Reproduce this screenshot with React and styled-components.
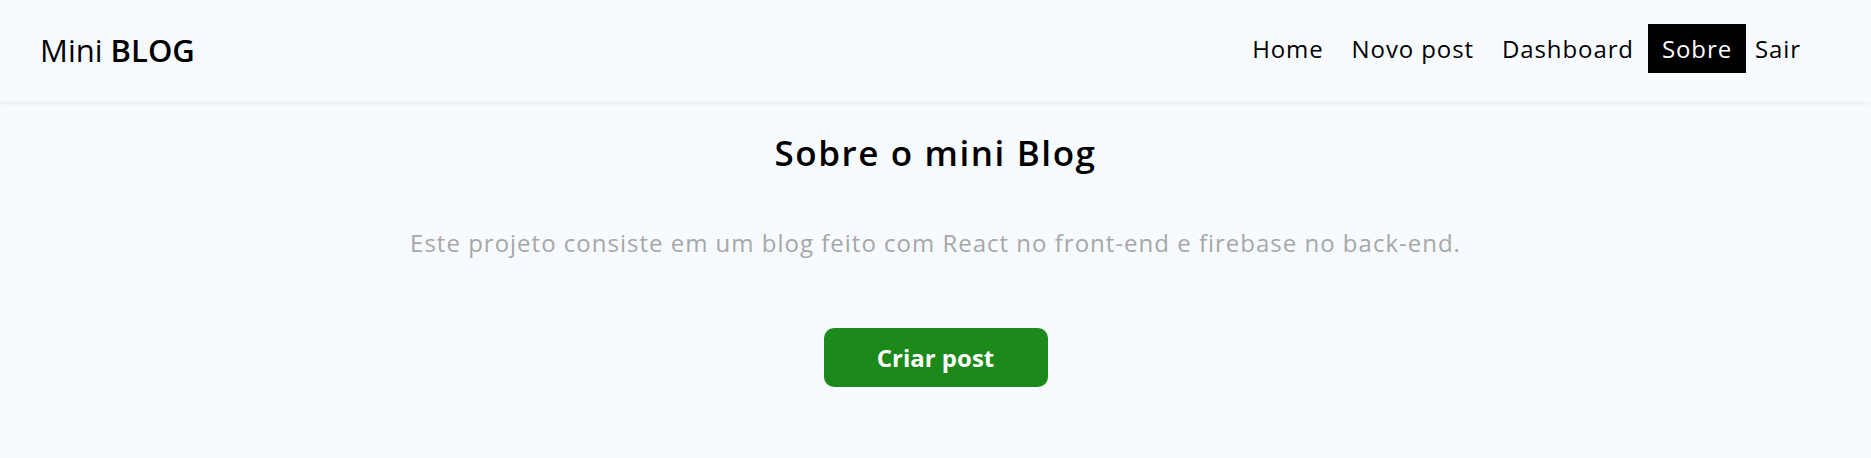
import React from "react";
import styled, { createGlobalStyle } from "styled-components";

const GlobalStyle = createGlobalStyle`
  * { box-sizing: border-box; }
  body {
    margin: 0;
    background: #f7fbff;
    font-family: "Open Sans", "Liberation Sans", sans-serif;
    color: #000;
  }
`;

const Navbar = styled.nav`
  display: flex;
  justify-content: space-between;
  align-items: center;
  height: 102px;
  padding: 0 61px 0 40px;
  background: #f7fbff;
  box-shadow: 0 2px 5px rgba(0, 0, 0, 0.06);
`;

const Brand = styled.a`
  font-size: 31px;
  font-weight: 400;
  color: #000;
  text-decoration: none;
  margin-top: -2px;
  strong { font-weight: 600; }
`;

const Links = styled.ul`
  display: flex;
  align-items: center;
  list-style: none;
  margin: 0;
  padding: 0;
  margin-top: -5px;
`;

const NavLink = styled.a`
  display: block;
  font-size: 24px;
  letter-spacing: 0.9px;
  padding: 8px ${(p) => (p.$tight ? "9px" : "14px")};
  color: ${(p) => (p.$active ? "#fff" : "#000")};
  background: ${(p) => (p.$active ? "#000" : "transparent")};
  text-decoration: none;
  cursor: pointer;
`;

const Main = styled.main`
  display: flex;
  flex-direction: column;
  align-items: center;
  padding-top: 27px;
`;

const Title = styled.h2`
  font-size: 35px;
  font-weight: 600;
  letter-spacing: 1.6px;
  margin: 0;
`;

const Text = styled.p`
  font-size: 24px;
  letter-spacing: 1px;
  color: #a7a7a7;
  margin: 50px 0 0;
`;

const Button = styled.a`
  display: flex;
  align-items: center;
  justify-content: center;
  width: 224px;
  height: 59px;
  margin-top: 69px;
  background: #1b8a1b;
  border-radius: 10px;
  color: #fff;
  font-size: 24px;
  font-weight: 700;
  text-decoration: none;
`;

export default function App() {
  const links = ["Home", "Novo post", "Dashboard", "Sobre"];
  return (
    <>
      <GlobalStyle />
      <Navbar>
        <Brand>
          Mini <strong>BLOG</strong>
        </Brand>
        <Links>
          {links.map((l) => (
            <li key={l}>
              <NavLink $active={l === "Sobre"}>{l}</NavLink>
            </li>
          ))}
          <li>
            <NavLink $tight>Sair</NavLink>
          </li>
        </Links>
      </Navbar>
      <Main>
        <Title>Sobre o mini Blog</Title>
        <Text>
          Este projeto consiste em um blog feito com React no front-end e
          firebase no back-end.
        </Text>
        <Button>Criar post</Button>
      </Main>
    </>
  );
}
